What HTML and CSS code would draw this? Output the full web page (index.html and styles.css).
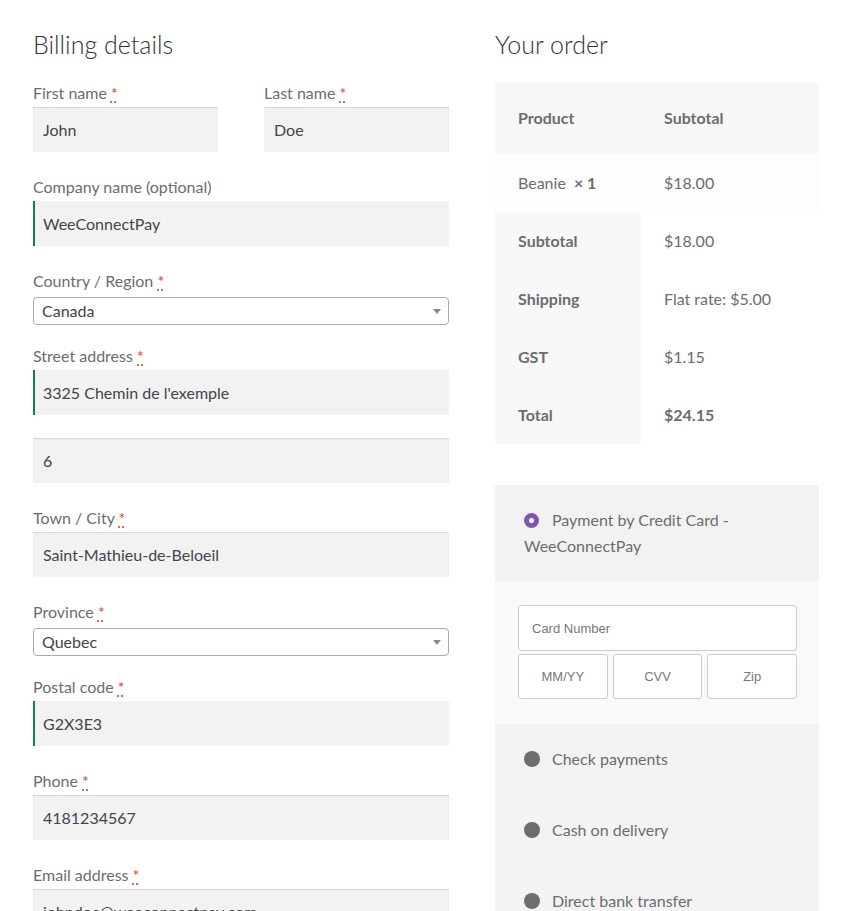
FILE: index.html
```html
<!DOCTYPE html>
<html lang="en">

<head>
    <meta charset="UTF-8">
    <meta name="viewport" content="width=device-width, initial-scale=1.0">
    <title>Checkout</title>
    <link rel="stylesheet" href="styles.css">
</head>

<body>
    <form class="checkout">
        <!-- Billing fields -->
        <div class="billing">
            <h3>Billing details</h3>

            <div class="row-pair">
                <p class="form-row">
                    <label for="firstName">First name <abbr class="required" title="required">*</abbr></label>
                    <input class="input-text" type="text" id="firstName" value="John">
                </p>
                <p class="form-row">
                    <label for="lastName">Last name <abbr class="required" title="required">*</abbr></label>
                    <input class="input-text" type="text" id="lastName" value="Doe">
                </p>
            </div>

            <p class="form-row">
                <label for="company">Company name <span class="optional">(optional)</span></label>
                <input class="input-text validated" type="text" id="company" value="WeeConnectPay">
            </p>

            <div class="form-row select-row">
                <label>Country / Region <abbr class="required" title="required">*</abbr></label>
                <div class="select-box">
                    <span>Canada</span>
                    <b class="select-arrow"></b>
                </div>
            </div>

            <p class="form-row address-row">
                <label for="address1">Street address <abbr class="required" title="required">*</abbr></label>
                <input class="input-text validated" type="text" id="address1" value="3325 Chemin de l'exemple">
            </p>

            <p class="form-row">
                <input class="input-text" type="text" id="address2" value="6">
            </p>

            <p class="form-row">
                <label for="city">Town / City <abbr class="required" title="required">*</abbr></label>
                <input class="input-text" type="text" id="city" value="Saint-Mathieu-de-Beloeil">
            </p>

            <div class="form-row select-row">
                <label>Province <abbr class="required" title="required">*</abbr></label>
                <div class="select-box">
                    <span>Quebec</span>
                    <b class="select-arrow"></b>
                </div>
            </div>

            <p class="form-row">
                <label for="postcode">Postal code <abbr class="required" title="required">*</abbr></label>
                <input class="input-text validated" type="text" id="postcode" value="G2X3E3">
            </p>

            <p class="form-row">
                <label for="phone">Phone <abbr class="required" title="required">*</abbr></label>
                <input class="input-text" type="tel" id="phone" value="4181234567">
            </p>

            <p class="form-row">
                <label for="email">Email address <abbr class="required" title="required">*</abbr></label>
                <input class="input-text" type="email" id="email" value="johndoe@weeconnectpay.com">
            </p>
        </div>

        <!-- Order summary and payment -->
        <div class="order">
            <h3>Your order</h3>

            <table class="order-table">
                <colgroup>
                    <col class="col-name">
                    <col>
                </colgroup>
                <thead>
                    <tr>
                        <th>Product</th>
                        <th>Subtotal</th>
                    </tr>
                </thead>
                <tbody>
                    <tr>
                        <td>Beanie <strong class="qty">&times;&nbsp;1</strong></td>
                        <td>$18.00</td>
                    </tr>
                </tbody>
                <tfoot>
                    <tr>
                        <th>Subtotal</th>
                        <td>$18.00</td>
                    </tr>
                    <tr>
                        <th>Shipping</th>
                        <td>Flat rate: $5.00</td>
                    </tr>
                    <tr>
                        <th>GST</th>
                        <td>$1.15</td>
                    </tr>
                    <tr>
                        <th>Total</th>
                        <td><strong>$24.15</strong></td>
                    </tr>
                </tfoot>
            </table>

            <ul class="payment-methods">
                <li class="method selected">
                    <label class="method-label"><span class="radio"></span>Payment by Credit Card - WeeConnectPay</label>
                    <div class="payment-box">
                        <input class="card-input card-number" type="text" placeholder="Card Number">
                        <div class="card-row">
                            <input class="card-input" type="text" placeholder="MM/YY">
                            <input class="card-input" type="text" placeholder="CVV">
                            <input class="card-input" type="text" placeholder="Zip">
                        </div>
                    </div>
                </li>
                <li class="method">
                    <label class="method-label"><span class="radio"></span>Check payments</label>
                </li>
                <li class="method">
                    <label class="method-label"><span class="radio"></span>Cash on delivery</label>
                </li>
                <li class="method">
                    <label class="method-label"><span class="radio"></span>Direct bank transfer</label>
                </li>
            </ul>
        </div>
    </form>
</body>

</html>
```

FILE: styles.css
```css
:root {
    --text-color: #6d6d6d;
    --heading-color: #333333;
    --input-text: #43454b;
    --input-bg: #f2f2f2;
    --valid-color: #0f834d;
    --required-color: #e2401c;
    --accent-color: #7f54b3;
    --th-bg: #f8f8f8;
    --td-bg: #fdfdfd;
    --method-bg: #f3f3f3;
    --box-bg: #f9f9f9;

    --font-family: Lato, "Liberation Sans", sans-serif;
    --line: 26px;
    --pad: 23px;
}

* {
    box-sizing: border-box;
}

body {
    margin: 0;
    font-family: var(--font-family);
    font-size: 16px;
    line-height: var(--line);
    color: var(--text-color);
    background: #ffffff;
}

.checkout {
    display: flex;
    gap: 46px;
    padding: 26px 30px 40px 33px;
}

.billing {
    width: 416px;
}

.order {
    width: 324px;
}

h3 {
    margin: 0 0 18px;
    font-size: 25px;
    line-height: 36px;
    font-weight: 300;
    color: var(--heading-color);
}

.order h3 {
    margin-bottom: 21px;
}

/* Form rows */

.row-pair {
    display: flex;
    justify-content: space-between;
}

.row-pair .form-row {
    width: 185px;
}

.form-row {
    margin: 0 0 22px;
}

.address-row {
    margin-bottom: 23px;
}

.form-row label {
    display: block;
    margin-bottom: 1px;
}

abbr.required {
    color: var(--required-color);
    text-decoration: underline dotted;
    text-underline-offset: 3px;
    border: none;
}

.input-text {
    display: block;
    width: 100%;
    height: 45px;
    padding: 0 10px;
    border: none;
    border-radius: 0;
    background: var(--input-bg);
    box-shadow: inset 0 1px 1px rgba(0, 0, 0, 0.125);
    font-family: var(--font-family);
    font-size: 16px;
    color: var(--input-text);
    outline: none;
}

.input-text.validated {
    box-shadow: inset 2px 0 0 var(--valid-color);
}

/* Select boxes */

.select-row {
    margin-bottom: 18px;
}

.select-row label {
    margin-bottom: 3px;
}

.select-box {
    position: relative;
    height: 28px;
    padding-left: 8px;
    border: 1px solid #aaaaaa;
    border-radius: 4px;
    background: #ffffff;
    line-height: 26px;
    color: #444444;
}

.select-arrow {
    position: absolute;
    top: 11px;
    right: 7px;
    border-style: solid;
    border-width: 5px 4px 0 4px;
    border-color: #888888 transparent transparent transparent;
}

/* Order table */

.order-table {
    width: 100%;
    border-collapse: collapse;
    border-spacing: 0;
    margin: 0 0 41px;
}

.col-name {
    width: 146px;
}

.order-table th,
.order-table td {
    padding: 16px var(--pad);
    text-align: left;
    vertical-align: top;
}

.order-table th {
    background: var(--th-bg);
    font-weight: 700;
}

.order-table thead th {
    padding-top: 22px;
    padding-bottom: 23px;
}

.order-table tbody td {
    background: var(--td-bg);
}

.qty {
    margin-left: 4px;
    font-weight: 700;
}

/* Payment methods */

.payment-methods {
    list-style: none;
    margin: 0;
    padding: 0;
}

.method {
    background: var(--method-bg);
}

.method-label {
    display: block;
    padding: 22px 22px 23px 29px;
}

.selected .method-label {
    padding-bottom: 22px;
    background: #f2f2f2;
}

.radio {
    display: inline-block;
    width: 16px;
    height: 16px;
    margin-right: 12px;
    border-radius: 50%;
    background: var(--text-color);
    vertical-align: -2px;
}

.selected .radio {
    width: 15px;
    height: 15px;
    margin-right: 13px;
    background: #ffffff;
    border: 5px solid var(--accent-color);
}

.payment-box {
    padding: 24px 22px 25px 23px;
    background: var(--box-bg);
}

.card-row {
    display: grid;
    grid-template-columns: repeat(3, 1fr);
    gap: 5px;
    margin-top: 3px;
}

.card-input {
    display: block;
    width: 100%;
    height: 45px;
    padding: 0 13px;
    border: 1px solid #cccccc;
    border-radius: 3px;
    background: #ffffff;
    font-family: "Liberation Sans", Arial, sans-serif;
    font-size: 13px;
    color: #43454b;
    text-align: center;
    outline: none;
}

.card-input::placeholder {
    color: #777777;
}

.card-number {
    height: 46px;
    text-align: left;
}
```
